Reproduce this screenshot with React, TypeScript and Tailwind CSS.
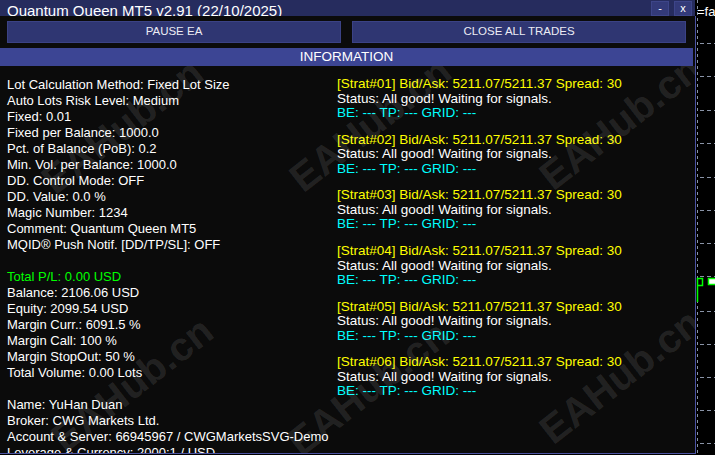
import React from 'react';

const SETTINGS = [
  'Lot Calculation Method: Fixed Lot Size',
  'Auto Lots Risk Level: Medium',
  'Fixed: 0.01',
  'Fixed per Balance: 1000.0',
  'Pct. of Balance (PoB): 0.2',
  'Min. Vol. per Balance: 1000.0',
  'DD. Control Mode: OFF',
  'DD. Value: 0.0 %',
  'Magic Number: 1234',
  'Comment: Quantum Queen MT5',
  'MQID® Push Notif. [DD/TP/SL]: OFF',
];

const ACCOUNT = [
  'Balance: 2106.06 USD',
  'Equity: 2099.54 USD',
  'Margin Curr.: 6091.5 %',
  'Margin Call: 100 %',
  'Margin StopOut: 50 %',
  'Total Volume: 0.00 Lots',
];

const BROKER = [
  'Name: YuHan Duan',
  'Broker: CWG Markets Ltd.',
  'Account & Server: 66945967 / CWGMarketsSVG-Demo',
  'Leverage & Currency: 2000:1 / USD',
];

const STRATS = ['01', '02', '03', '04', '05', '06'];

// watermark stamps, positioned inside the body area
const STAMPS = [
  'left-[122px] top-[60px]',
  'left-[370px] top-[58px]',
  'left-[620px] top-[56px]',
  'left-[132px] top-[318px]',
  'left-[368px] top-[322px]',
  'left-[620px] top-[310px]',
];

const GRID_Y = [43, 76, 110, 143, 177, 210, 243, 276, 311, 344, 377, 410, 443];

function ChartStrip() {
  return (
    <div className="relative h-[455px] flex-1 bg-black">
      <svg width="19" height="455" className="absolute left-0 top-0">
        <line x1="1.5" y1="0" x2="1.5" y2="455" stroke="#8993a6" strokeDasharray="3 3" />
        {GRID_Y.map((y) => (
          <line key={y} x1="4" y1={y + 0.5} x2="19" y2={y + 0.5} stroke="#8993a6" strokeDasharray="4 3" />
        ))}
        <path d="M1.5 302 V278.5 H6.5 V285.5 H1.5" fill="none" stroke="#00ff00" strokeWidth="1.5" />
        <rect x="12.5" y="278.5" width="8" height="6" fill="#ffffff" stroke="#00ff00" strokeWidth="1.5" />
      </svg>
      <span className="absolute left-[1px] top-[4px] text-[13px] leading-[15px] text-white">=fal</span>
    </div>
  );
}

export default function App() {
  return (
    <div className="flex h-[455px] w-[715px] overflow-hidden bg-black font-['Liberation_Sans',Arial,sans-serif]">
      <div className="flex h-[454px] w-[696px] flex-col">
        {/* title bar */}
        <div className="flex h-4 w-[695px] shrink-0 items-start overflow-hidden bg-[#262c5e]">
          <div className="flex-1 pl-[7px] pt-[2px] text-[15px] leading-[17px] text-white">
            Quantum Queen MT5 v2.91 (22/10/2025)
          </div>
          <div className="mr-[3px] mt-px flex gap-[5px]">
            <div className="flex h-[15px] w-[18px] items-center justify-center border border-[#3d4589] bg-[#333a79] text-[11px] leading-none text-white">
              -
            </div>
            <div className="flex h-[15px] w-[18px] items-center justify-center border border-[#3d4589] bg-[#333a79] text-[11px] leading-none text-white">
              x
            </div>
          </div>
        </div>

        <div className="relative flex flex-1 flex-col overflow-hidden border-r border-b border-[#4b53a3] bg-[#0b0b0b]">
          {/* action buttons */}
          <div className="flex gap-[11px] px-[7px] pt-[5px]">
            <button className="h-[22px] w-[334px] border border-[#3b4285] bg-[#2f3672] text-[11.5px] text-[#ececf4]">
              PAUSE EA
            </button>
            <button className="h-[22px] w-[334px] border border-[#3b4285] bg-[#2f3672] text-[11.5px] text-[#ececf4]">
              CLOSE ALL TRADES
            </button>
          </div>

          <div className="mt-[5px] flex h-[18px] w-[693px] items-center justify-center bg-[#3c4594] text-[13.5px] text-white">
            INFORMATION
          </div>

          {/* body */}
          <div className="relative flex flex-1 overflow-hidden pt-[11px]">
            <div className="w-[337px] shrink-0 pl-[7px] text-[13px] leading-4 text-white">
              {SETTINGS.map((t) => (
                <div key={t} className="whitespace-nowrap">{t}</div>
              ))}
              <div className="h-4" />
              <div className="text-[#00ff00]">Total P/L: 0.00 USD</div>
              {ACCOUNT.map((t) => (
                <div key={t} className="whitespace-nowrap">{t}</div>
              ))}
              <div className="h-4" />
              {BROKER.map((t) => (
                <div key={t} className="whitespace-nowrap">{t}</div>
              ))}
            </div>

            <div className="flex flex-col gap-[12.2px] text-[13.5px] leading-[14.5px]">
              {STRATS.map((n) => (
                <div key={n} className="whitespace-nowrap">
                  <div className="text-[#ffff00]">[Strat#{n}] Bid/Ask: 5211.07/5211.37 Spread: 30</div>
                  <div className="text-white">Status: All good! Waiting for signals.</div>
                  <div className="text-[#00ffff]">BE: --- TP: --- GRID: ---</div>
                </div>
              ))}
            </div>

            <div className="pointer-events-none absolute inset-0">
              {STAMPS.map((pos) => (
                <div
                  key={pos}
                  className={`absolute ${pos} -translate-x-1/2 -translate-y-1/2 -rotate-[38deg] whitespace-nowrap text-[40px] font-bold leading-none text-[#ffffff1c]`}
                >
                  EAHub.cn
                </div>
              ))}
            </div>
          </div>
        </div>
      </div>
      <ChartStrip />
    </div>
  );
}
